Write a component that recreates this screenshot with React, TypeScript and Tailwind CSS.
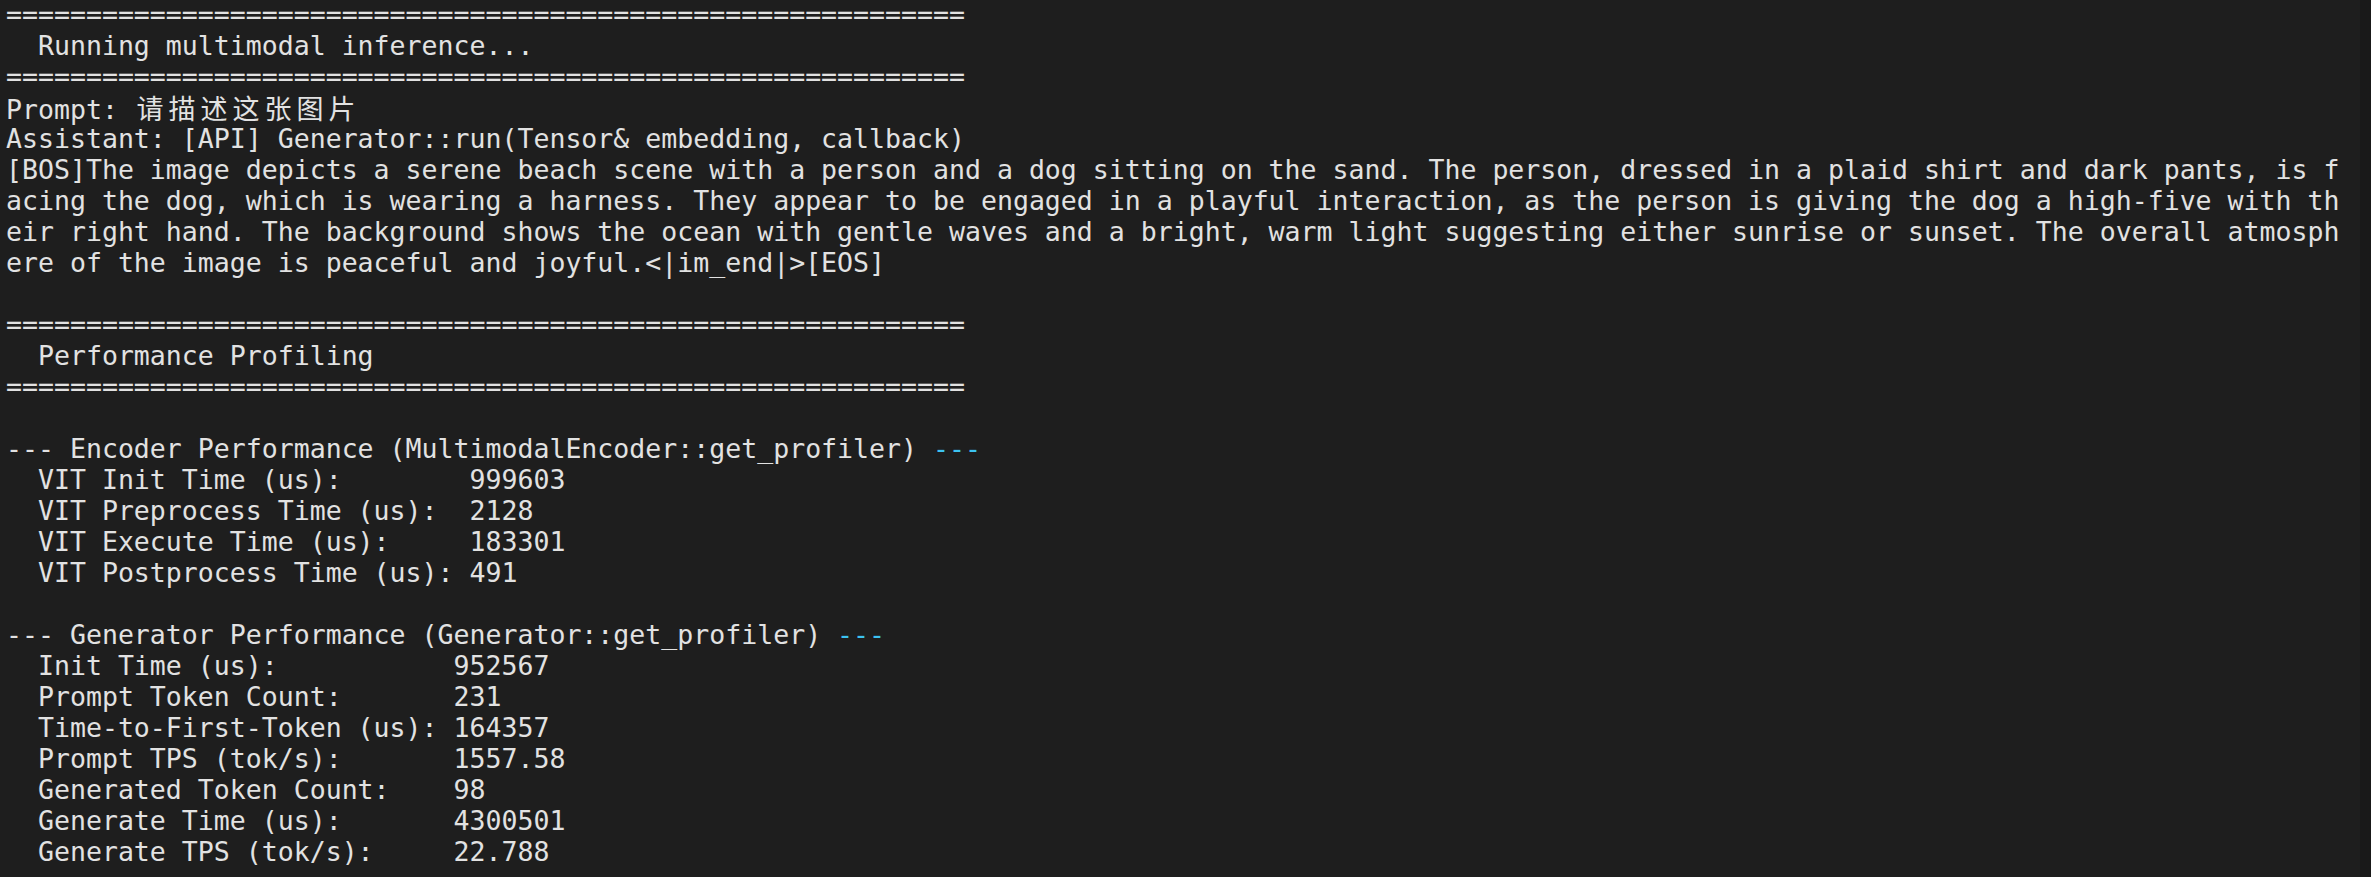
const rule = "=".repeat(60);

const Cjk = ({ text }: { text: string }) => (
  <>
    {text.split("").map((c, i) => (
      <span
        key={i}
        className="inline-block w-[32px] text-center text-[27px] font-['Noto_Sans_CJK_SC',sans-serif]"
      >
        {c}
      </span>
    ))}
  </>
);

const Line = ({ children }: { children?: React.ReactNode }) => (
  <div className="h-[31px] leading-[31px] whitespace-pre">{children ?? " "}</div>
);

const Dash = () => <span className="text-[#3cc3f0]">---</span>;

const answer = [
  "[BOS]The image depicts a serene beach scene with a person and a dog sitting on the sand. The person, dressed in a plaid shirt and dark pants, is f",
  "acing the dog, which is wearing a harness. They appear to be engaged in a playful interaction, as the person is giving the dog a high-five with th",
  "eir right hand. The background shows the ocean with gentle waves and a bright, warm light suggesting either sunrise or sunset. The overall atmosph",
  "ere of the image is peaceful and joyful.<|im_end|>[EOS]",
];

const encoder = [
  ["VIT Init Time (us):        ", "999603"],
  ["VIT Preprocess Time (us):  ", "2128"],
  ["VIT Execute Time (us):     ", "183301"],
  ["VIT Postprocess Time (us): ", "491"],
];

const generator = [
  ["Init Time (us):           ", "952567"],
  ["Prompt Token Count:       ", "231"],
  ["Time-to-First-Token (us): ", "164357"],
  ["Prompt TPS (tok/s):       ", "1557.58"],
  ["Generated Token Count:    ", "98"],
  ["Generate Time (us):       ", "4300501"],
  ["Generate TPS (tok/s):     ", "22.788"],
];

const App = () => {
  return (
    <div className="flex w-[2371px] h-[877px] overflow-hidden bg-[#1e1e1e] text-[#e2e2e2]">
      <div className="flex-1 -mt-px pl-[6px] font-['DejaVu_Sans_Mono',monospace] text-[26.55px]">
        <Line>{rule}</Line>
        <Line>{"  Running multimodal inference..."}</Line>
        <Line>{rule}</Line>
        <Line>
          {"Prompt: "}
          <Cjk text="请描述这张图片" />
        </Line>
        <Line>{"Assistant: [API] Generator::run(Tensor& embedding, callback)"}</Line>
        {answer.map((l, i) => (
          <Line key={i}>{l}</Line>
        ))}
        <Line />
        <Line>{rule}</Line>
        <Line>{"  Performance Profiling"}</Line>
        <Line>{rule}</Line>
        <Line />
        <Line>
          {"--- Encoder Performance (MultimodalEncoder::get_profiler) "}
          <Dash />
        </Line>
        {encoder.map(([k, v]) => (
          <Line key={k}>{"  " + k + v}</Line>
        ))}
        <Line />
        <Line>
          {"--- Generator Performance (Generator::get_profiler) "}
          <Dash />
        </Line>
        {generator.map(([k, v]) => (
          <Line key={k}>{"  " + k + v}</Line>
        ))}
      </div>
      {/* scrollbar track */}
      <div className="w-[11px] bg-[#191919]" />
    </div>
  );
};

export default App;
